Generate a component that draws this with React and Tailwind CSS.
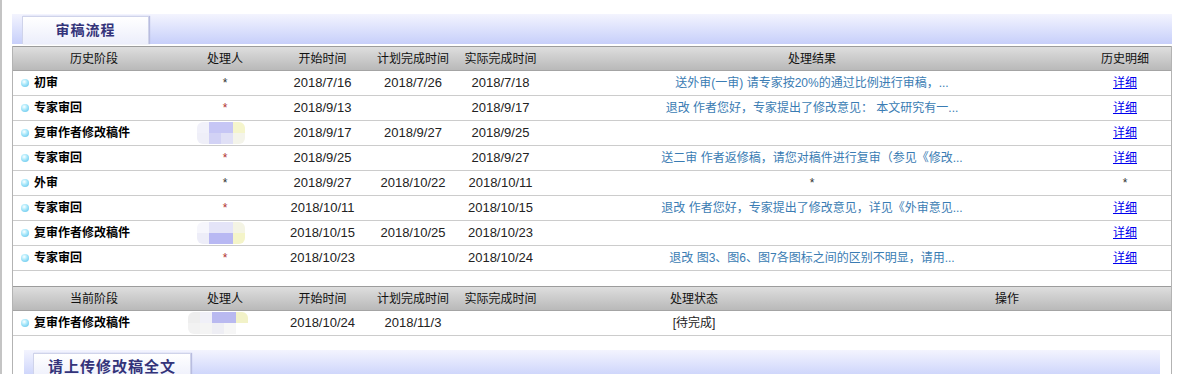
import React from 'react';

const history = [
  { stage: '初审', person: '*', start: '2018/7/16', plan: '2018/7/26', actual: '2018/7/18', result: '送外审(一审) 请专家按20%的通过比例进行审稿，...', link: true },
  { stage: '专家审回', person: '*', red: true, start: '2018/9/13', plan: '', actual: '2018/9/17', result: '退改 作者您好，专家提出了修改意见： 本文研究有一...', link: true },
  { stage: '复审作者修改稿件', mosaic: 'a', start: '2018/9/17', plan: '2018/9/27', actual: '2018/9/25', result: '', link: true },
  { stage: '专家审回', person: '*', red: true, start: '2018/9/25', plan: '', actual: '2018/9/27', result: '送二审 作者返修稿，请您对稿件进行复审（参见《修改...', link: true },
  { stage: '外审', person: '*', start: '2018/9/27', plan: '2018/10/22', actual: '2018/10/11', result: '*', star: true },
  { stage: '专家审回', person: '*', red: true, start: '2018/10/11', plan: '', actual: '2018/10/15', result: '退改 作者您好，专家提出了修改意见，详见《外审意见...', link: true },
  { stage: '复审作者修改稿件', mosaic: 'b', start: '2018/10/15', plan: '2018/10/25', actual: '2018/10/23', result: '', link: true },
  { stage: '专家审回', person: '*', red: true, start: '2018/10/23', plan: '', actual: '2018/10/24', result: '退改 图3、图6、图7各图标之间的区别不明显，请用...', link: true },
];

// pixelated blur where a name was hidden
const mosaics = {
  a: [
    ['#f1f1fa', '#c6c6f5', '#c6c6f5', '#f5f5cc'],
    ['#efeff8', '#d2d2f5', '#e0e0f6', '#f4f4ea'],
  ],
  b: [
    ['#f6f6fc', '#e4e4f8', '#e4e4f8', '#f4f4e4'],
    ['#ededf8', '#b8b8f3', '#b8b8f3', '#f4f4c8'],
  ],
  c: [
    ['#eeeeee', '#f0f0f8', '#b9b9f0', '#b9b9f0', '#f2f2c8'],
    ['#f2f2f2', '#f4f4f4', '#eeeef4', '#f6f6f6', '#ffffff'],
  ],
};

const Mosaic = ({ kind }) => (
  <div className="flex flex-col blur-[0.6px] rounded-md overflow-hidden">
    {mosaics[kind].map((line, i) => (
      <div key={i} className="flex">
        {line.map((c, j) => (
          <div key={j} className="w-[12px] h-[11px]" style={{ backgroundColor: c }} />
        ))}
      </div>
    ))}
  </div>
);

const Bullet = () => (
  <span className="inline-block w-[8px] h-[8px] rounded-full bg-[radial-gradient(circle_at_40%_35%,#ffffff_0%,#b4ecfc_35%,#52bde8_100%)] ml-[1px] mr-[5px] shrink-0" />
);

const Tab = ({ label, className }) => (
  <div className={`h-full flex items-center justify-center bg-gradient-to-b from-white to-[#eceefb] border border-b-0 border-[#cfd3ea] shadow-[1px_0_1px_#b9bde0] text-[#33337a] font-bold ${className}`}>
    {label}
  </div>
);

const cols1 = 'grid grid-cols-[162px_100px_95px_86px_89px_534px_92px]';
const cols2 = 'grid grid-cols-[162px_100px_95px_86px_89px_298px_328px]';
const head = 'h-[25px] border-t border-b border-t-[#9c9c9c] border-b-[#a4a4a4] bg-gradient-to-b from-[#dedede] to-[#b9b9b9] items-center text-center text-[12px] text-[#111]';
const date = 'text-center text-[13px] text-[#222]';

export default function App() {
  return (
    <div className="flex min-h-[374px] bg-white font-['Liberation_Sans','Noto_Sans_CJK_SC',sans-serif]">
      <div className="w-[2px] bg-[#c4c4c4]" />
      <div className="ml-[10px] w-[1160px] pt-[14px]">
        <div className="h-[30px] bg-gradient-to-b from-[#f3f4fe] to-[#c7cffa] pl-[10px] pt-[2px]">
          <Tab label="审稿流程" className="w-[127px] text-[14px] tracking-[1px]" />
        </div>
        <div className="mt-[2px] border-l border-r border-[#b3b3b3] min-h-[328px]">
          <div className={`${cols1} ${head}`}>
            <div>历史阶段</div>
            <div>处理人</div>
            <div>开始时间</div>
            <div>计划完成时间</div>
            <div>实际完成时间</div>
            <div>处理结果</div>
            <div>历史明细</div>
          </div>
          {history.map((r, i) => (
            <div key={i} className={`${cols1} h-[25px] border-b border-[#cccccc] items-center`}>
              <div className="flex items-center pl-[7px] text-[12px] font-bold text-black">
                <Bullet />
                {r.stage}
              </div>
              <div className="flex justify-center">
                {r.mosaic ? (
                  <div className="-ml-[8px]">
                    <Mosaic kind={r.mosaic} />
                  </div>
                ) : (
                  <span className={`text-[12px] ${r.red ? 'text-[#b03030]' : 'text-[#333]'}`}>{r.person}</span>
                )}
              </div>
              <div className={date}>{r.start}</div>
              <div className={date}>{r.plan}</div>
              <div className={date}>{r.actual}</div>
              <div className={`text-center text-[12px] whitespace-nowrap ${r.star ? 'text-[#333]' : 'text-[#3a7cb3]'}`}>{r.result}</div>
              <div className="text-center text-[12px]">
                {r.link ? <a href="#" className="text-[#0000ee] underline">详细</a> : <span className="text-[#333]">*</span>}
              </div>
            </div>
          ))}
          <div className="h-[15px]" />
          <div className={`${cols2} ${head}`}>
            <div>当前阶段</div>
            <div>处理人</div>
            <div>开始时间</div>
            <div>计划完成时间</div>
            <div>实际完成时间</div>
            <div>处理状态</div>
            <div>操作</div>
          </div>
          <div className={`${cols2} h-[25px] border-b border-[#cccccc] items-center`}>
            <div className="flex items-center pl-[7px] text-[12px] font-bold text-black">
              <Bullet />
              复审作者修改稿件
            </div>
            <div className="flex justify-center -ml-[14px]">
              <Mosaic kind="c" />
            </div>
            <div className={date}>2018/10/24</div>
            <div className={date}>2018/11/3</div>
            <div className={date}></div>
            <div className="text-center text-[12px] text-[#222]">[待完成]</div>
            <div></div>
          </div>
          <div className="px-[11px] pt-[14px]">
            <div className="h-[30px] bg-gradient-to-b from-[#f3f4fe] to-[#c7cffa] pl-[9px] pt-[3px]">
              <Tab label="请上传修改稿全文" className="w-[158px] text-[15px] tracking-[1px]" />
            </div>
          </div>
        </div>
      </div>
    </div>
  );
}
